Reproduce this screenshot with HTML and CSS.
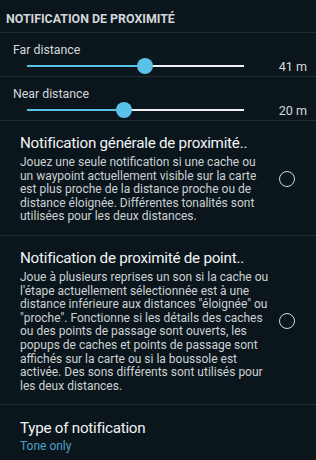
FILE: index.html
```html
<!DOCTYPE html>
<html lang="fr">
<head>
    <meta charset="UTF-8">
    <meta name="viewport" content="width=device-width, initial-scale=1.0">
    <title>Notification de proximité</title>
    <link rel="stylesheet" href="styles.css">
</head>
<body>
    <div class="category">NOTIFICATION DE PROXIMITÉ</div>

    <div class="seek-pref">
        <div class="seek-label">Far distance</div>
        <div class="seek-row">
            <div class="track">
                <div class="track-fill" style="width: 54.4%"></div>
                <div class="thumb" style="left: 54.4%"></div>
            </div>
            <div class="seek-value">41 m</div>
        </div>
    </div>

    <div class="seek-pref">
        <div class="seek-label">Near distance</div>
        <div class="seek-row">
            <div class="track">
                <div class="track-fill" style="width: 44.7%"></div>
                <div class="thumb" style="left: 44.7%"></div>
            </div>
            <div class="seek-value">20 m</div>
        </div>
    </div>

    <div class="check-pref">
        <div class="pref-text">
            <div class="pref-title">Notification générale de proximité..</div>
            <div class="pref-summary">Jouez une seule notification si une cache ou<br>
                un waypoint actuellement visible sur la carte<br>
                est plus proche de la distance proche ou de<br>
                distance éloignée. Différentes tonalités sont<br>
                utilisées pour les deux distances.</div>
        </div>
        <div class="radio"></div>
    </div>

    <div class="check-pref">
        <div class="pref-text">
            <div class="pref-title">Notification de proximité de point..</div>
            <div class="pref-summary">Joue à plusieurs reprises un son si la cache ou<br>
                l'étape actuellement sélectionnée est à une<br>
                distance inférieure aux distances "éloignée" ou<br>
                "proche". Fonctionne si les détails des caches<br>
                ou des points de passage sont ouverts, les<br>
                popups de caches et points de passage sont<br>
                affichés sur la carte ou si la boussole est<br>
                activée. Des sons différents sont utilisés pour<br>
                les deux distances.</div>
        </div>
        <div class="radio"></div>
    </div>

    <div class="list-pref">
        <div class="pref-title">Type of notification</div>
        <div class="list-value">Tone only</div>
    </div>
</body>
</html>
```

FILE: styles.css
```css
body {
    margin: 0;
    padding: 0;
    background: #0a161c;
    font-family: Roboto, "Noto Sans", sans-serif;
    color: #e6e8e9;
    width: 316px;
    height: 460px;
    overflow: hidden;
}
.category {
    padding: 12px 6px 6px 6px;
    font-size: 12.4px;
    line-height: 14px;
    font-weight: bold;
    color: #d3d7d9;
    border-bottom: 1px solid #1f2c33;
}
.seek-pref {
    padding: 9px 9px 2px 13px;
    border-bottom: 1px solid #1f2c33;
}
.seek-label {
    font-size: 12.3px;
    line-height: 16px;
    color: #d6d9db;
}
.seek-row {
    display: flex;
    align-items: center;
    height: 16px;
}
.track {
    position: relative;
    width: 217px;
    height: 2px;
    margin-left: 14px;
    background: #eef0f1;
}
.track-fill {
    height: 2px;
    background: #5ac1e8;
}
.thumb {
    position: absolute;
    top: -7px;
    width: 16px;
    height: 16px;
    margin-left: -8px;
    border-radius: 50%;
    background: #5ac1e8;
}
.seek-value {
    flex: 1;
    text-align: right;
    font-size: 12.6px;
    color: #d6d9db;
}
.check-pref {
    display: flex;
    align-items: center;
    padding: 13px 21px 11px 20px;
    border-bottom: 1px solid #1f2c33;
}
.pref-text {
    width: 250px;
}
.pref-title {
    font-size: 15.2px;
    line-height: 18px;
    letter-spacing: -0.25px;
    color: #f2f3f4;
    white-space: nowrap;
}
.pref-summary {
    margin-top: 4px;
    font-size: 12px;
    line-height: 13.6px;
    color: #cdd1d3;
}
.radio {
    margin-left: auto;
    width: 14px;
    height: 14px;
    border: 1.5px solid #d4d7d9;
    border-radius: 50%;
}
.list-pref {
    padding: 14px 20px 0 20px;
}
.list-value {
    margin-top: 1px;
    font-size: 12px;
    line-height: 16px;
    color: #4aa2c6;
}
```
